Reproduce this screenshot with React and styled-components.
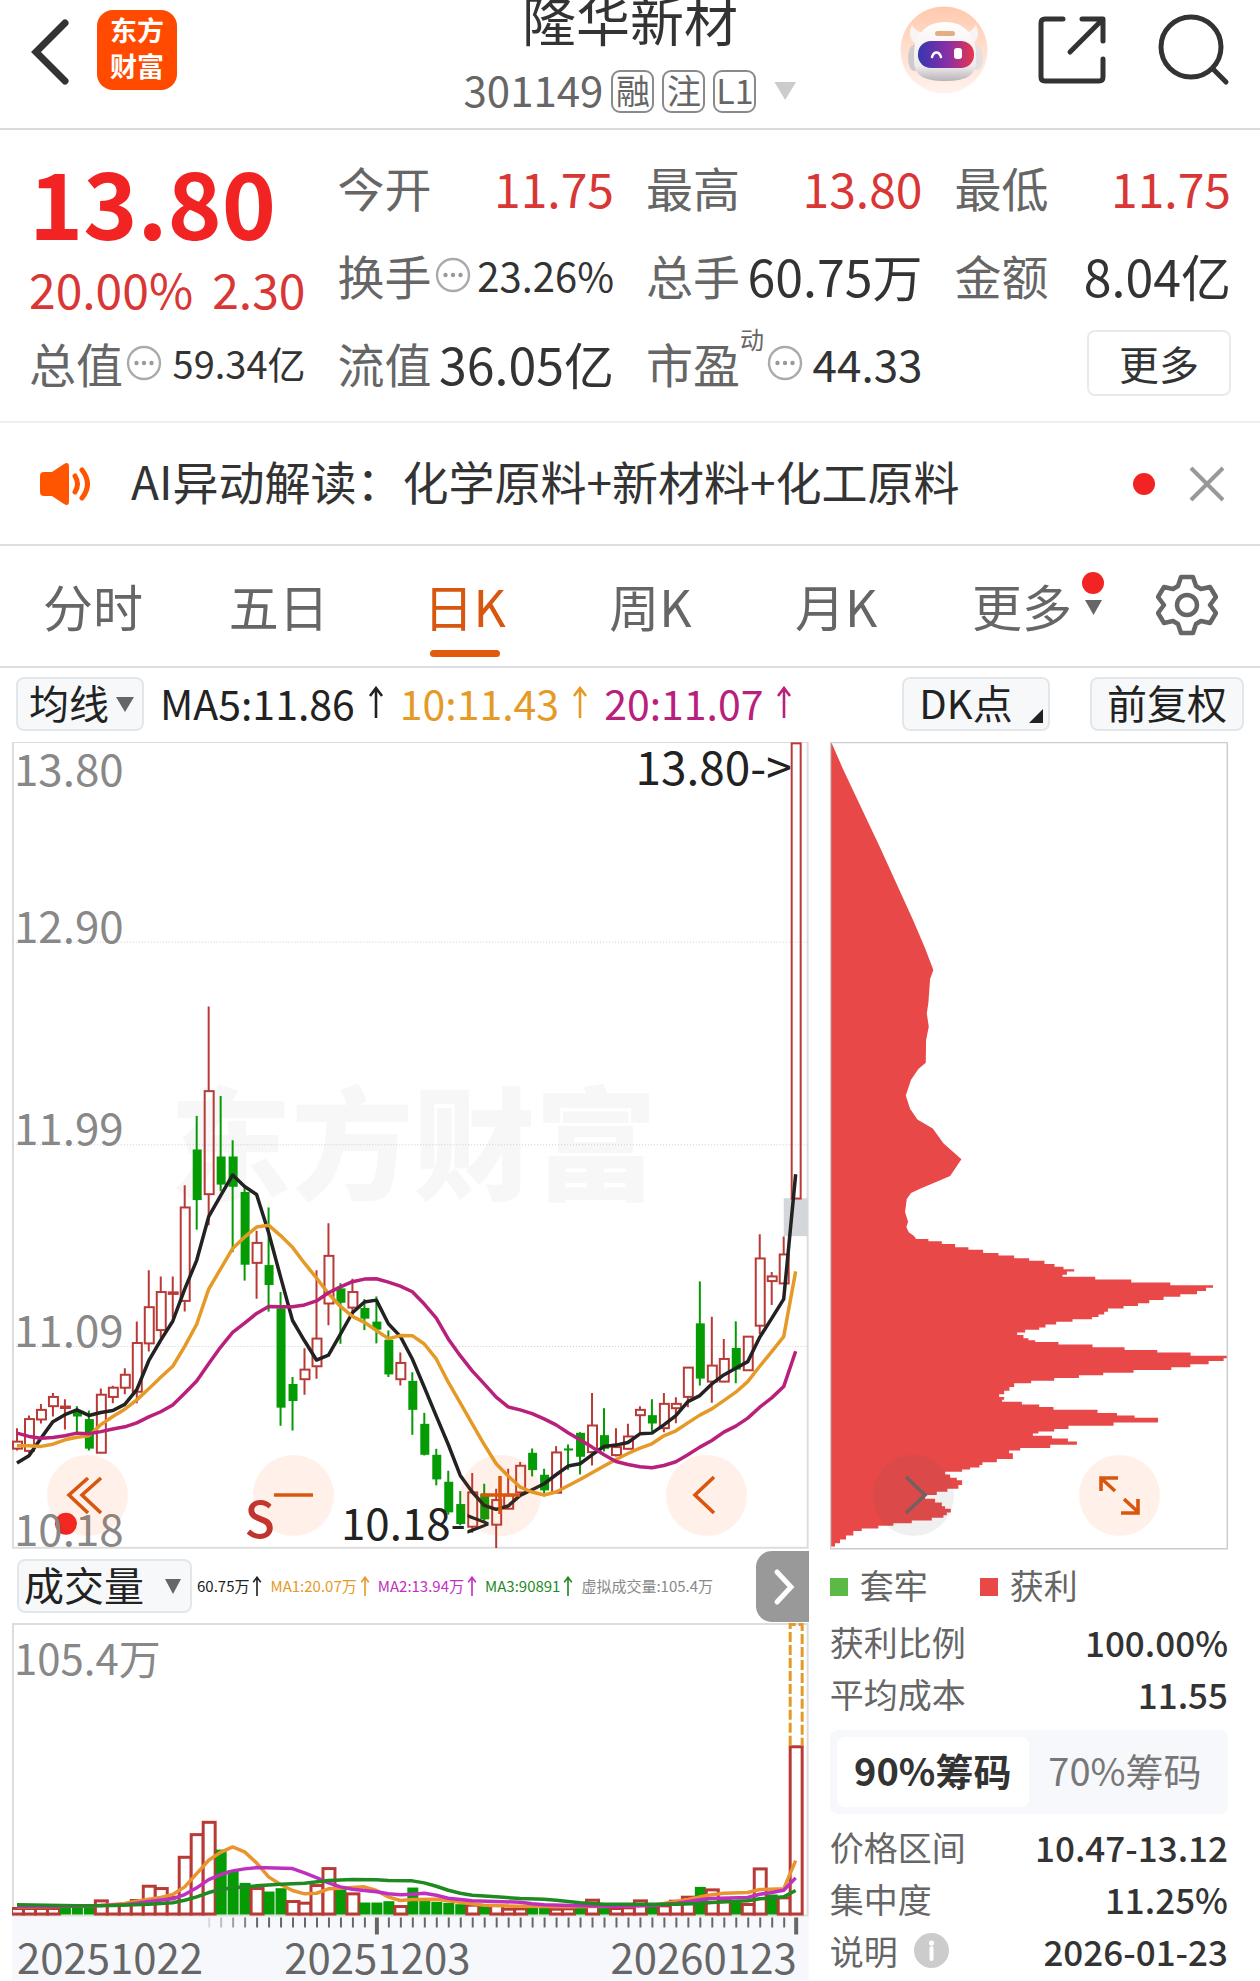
import React, { useState } from "react";
import styled, { createGlobalStyle, css } from "styled-components";

const GlobalStyle = createGlobalStyle`
  * { box-sizing: border-box; }
  body {
    margin: 0;
    background: #fff;
    color: #333;
    font-family: "Noto Sans CJK SC", "Noto Sans", sans-serif;
  }
  button, select {
    font: inherit;
    color: inherit;
    margin: 0;
    padding: 0;
    border: 0;
    background: none;
    cursor: pointer;
  }
  svg { display: block; flex: none; }
  h1, p, dl, dd, dt { margin: 0; font-weight: 400; }
`;

/* ---------- header ---------- */

const Header = styled.header`
  display: grid;
  grid-template-columns: 1fr auto 1fr;
  height: 130px;
  border-bottom: 2px solid #d9dcdf;
`;

const HeaderSide = styled.div`
  display: flex;
  align-items: flex-start;
  gap: ${(p) => p.$gap}px;
  padding: 6px 30px 0;
  justify-content: ${(p) => (p.$end ? "flex-end" : "flex-start")};
`;

const BackButton = styled.button`
  padding-top: 12px;
`;

const Logo = styled.div`
  width: 80px;
  height: 80px;
  margin-top: 4px;
  border-radius: 16px;
  background: #ff4a00;
  color: #fff;
  font-size: 27px;
  font-weight: 700;
  line-height: 36px;
  padding-top: 2px;
  text-align: center;
`;

const TitleBlock = styled.div`
  display: flex;
  flex-direction: column;
  align-items: center;
`;

const Title = styled.h1`
  font-size: 54px;
  line-height: 38px;
  height: 69px;
  color: #333;
`;

const CodeRow = styled.div`
  display: flex;
  align-items: center;
  gap: 8px;
  height: 44px;
  font-size: 42px;
  line-height: 40px;
  color: #666;
`;

const CodeText = styled.span`
  padding-bottom: 4px;
`;

const Badge = styled.span`
  width: 43px;
  height: 43px;
  border: 2px solid #8a8a8a;
  border-radius: 9px;
  font-size: 34px;
  line-height: 35px;
  text-align: center;
`;

/* ---------- quote ---------- */

const Quote = styled.section`
  display: grid;
  grid-template-columns: repeat(4, 1fr);
  grid-auto-rows: 88px;
  column-gap: 32px;
  padding: 13px 29px 14px 29px;
  border-bottom: 2px solid #eeeff1;
`;

const PriceBlock = styled.div`
  grid-row: span 2;
  color: #f12323;
`;

const Price = styled.p`
  font-size: 92px;
  font-weight: 700;
  line-height: 114px;
`;

const Change = styled.p`
  display: flex;
  justify-content: space-between;
  font-size: 48px;
  line-height: 62px;
  color: #d93636;
`;

const Cell = styled.div`
  display: flex;
  align-items: center;
  line-height: 88px;
  white-space: nowrap;
`;

const CellLabel = styled.span`
  font-size: 47px;
  color: #666;
`;

const CellValue = styled.span`
  margin-left: auto;
  font-size: ${(p) => p.$size}px;
  color: ${(p) => (p.$up ? "#d93636" : "#333")};
`;

const Hint = styled.svg`
  margin-left: 3px;
`;

const Sup = styled.sup`
  align-self: flex-start;
  font-size: 24px;
  line-height: 40px;
  color: #666;
`;

const MoreButton = styled.button`
  width: 144px;
  height: 66px;
  margin-left: auto;
  border: 2px solid #e8eaec;
  border-radius: 8px;
  font-size: 40px;
  line-height: 58px;
`;

/* ---------- notice ---------- */

const Notice = styled.section`
  display: flex;
  align-items: center;
  height: 123px;
  padding: 0 35px 0 39px;
  border-bottom: 2px solid #dcdee0;
`;

const NoticeText = styled.p`
  flex: 1;
  margin-left: 38px;
  padding-bottom: 7px;
  font-size: 46px;
  line-height: 60px;
`;

const Dot = styled.i`
  width: 22px;
  height: 22px;
  margin-right: 34px;
  border-radius: 50%;
  background: #f12323;
`;

/* ---------- tabs ---------- */

const Tabs = styled.nav`
  display: grid;
  grid-template-columns: repeat(6, 1fr) 145px;
  height: 122px;
  border-bottom: 2px solid #dcdee0;
`;

const Tab = styled.button`
  position: relative;
  display: flex;
  align-items: center;
  justify-content: center;
  gap: 10px;
  padding-bottom: 2px;
  font-size: 50px;
  line-height: 60px;
  color: ${(p) => (p.$active ? "#d8570f" : "#666")};
  ${(p) =>
    p.$active &&
    css`
      &::after {
        content: "";
        position: absolute;
        bottom: 9px;
        width: 70px;
        height: 7px;
        border-radius: 4px;
        background: #e25a0c;
      }
    `}
`;

const TabMarks = styled.span`
  width: 22px;
  margin-right: -32px;
  padding-bottom: 22px;
`;

/* ---------- indicator bars ---------- */

const chip = css`
  height: 54px;
  border: 2px solid #e4e7ea;
  border-radius: 8px;
  background: #f6f8fa;
  color: #222;
  font-size: 40px;
  line-height: 46px;
  padding-bottom: 4px;
`;

const Toolbar = styled.section`
  display: flex;
  align-items: center;
  height: 74px;
  padding: 0 16px 2px;
`;

const PickerLabel = styled.label`
  position: relative;
  flex: none;
`;

const Picker = styled.select`
  ${chip}
  display: block;
  appearance: none;
  width: ${(p) => p.$width}px;
  padding-left: ${(p) => p.$pad}px;
`;

const PickerArrow = styled.svg`
  position: absolute;
  right: 10px;
  top: 20px;
  pointer-events: none;
`;

const ChipButton = styled.button`
  ${chip}
  position: relative;
  width: ${(p) => p.$width}px;
  padding-right: ${(p) => p.$cut || 0}px;
`;

const Corner = styled.svg`
  position: absolute;
  right: 5px;
  bottom: 6px;
`;

const Averages = styled.div`
  display: flex;
  flex: 1;
  gap: 16px;
  margin-left: 16px;
  padding-bottom: 4px;
  font-size: 41px;
  line-height: 50px;
  white-space: nowrap;
`;

const Reading = styled.span`
  display: flex;
  align-items: center;
  gap: ${(p) => p.$gap}px;
  color: ${(p) => p.$color};
`;

const ChipGroup = styled.div`
  display: flex;
  gap: 40px;
`;

/* ---------- charts ---------- */

const ChartRow = styled.section`
  position: relative;
  display: grid;
  grid-template-columns: 2fr 1fr;
  column-gap: 21px;
  padding: 0 32px 0 12px;
`;

const Plot = styled.svg`
  width: 100%;
  height: auto;
`;

const AxisText = styled.text`
  font-size: ${(p) => p.$size || 44}px;
  fill: ${(p) => p.$fill || "#888"};
  font-weight: ${(p) => p.$weight || 400};
`;

const PlotControls = styled.div`
  position: absolute;
  left: 47px;
  right: 100px;
  bottom: 14px;
  display: flex;
  justify-content: space-between;
`;

const RoundButton = styled.button`
  width: 81px;
  height: 81px;
  border-radius: 50%;
  background: ${(p) => (p.$muted ? "rgba(90, 90, 90, 0.09)" : "rgba(255, 98, 20, 0.09)")};
`;

const VolumeBar = styled.div`
  display: flex;
  align-items: center;
  height: 73px;
  padding-left: 5px;
`;

const VolumeReadings = styled.div`
  display: flex;
  flex: 1;
  gap: 8px;
  margin-left: 5px;
  font-size: 15px;
  line-height: 24px;
  white-space: nowrap;
`;

const NextButton = styled.button`
  width: 53px;
  height: 71px;
  border-radius: 16px 0 0 16px;
  background: #999;
`;

/* ---------- chip statistics ---------- */

const Legend = styled.div`
  display: flex;
  align-items: center;
  gap: 52px;
  height: 66px;
  padding-top: 4px;
`;

const LegendItem = styled.span`
  display: flex;
  align-items: center;
  gap: 12px;
  font-size: 34px;
  line-height: 40px;
  color: #666;
  &::before {
    content: "";
    width: 18px;
    height: 18px;
    margin-top: 4px;
    background: ${(p) => p.$color};
  }
`;

const Stat = styled.div`
  display: flex;
  align-items: center;
  justify-content: space-between;
  height: 52px;
  line-height: 52px;
`;

const StatLabel = styled.dt`
  display: flex;
  align-items: center;
  gap: 16px;
  font-size: 34px;
  color: #666;
`;

const StatValue = styled.dd`
  font-size: 35px;
  font-weight: 500;
`;

const Segments = styled.div`
  display: flex;
  height: 84px;
  margin: 10px 0 7px;
  padding: 7px;
  border-radius: 8px;
  background: #f7f8fb;
`;

const Segment = styled.button`
  flex: 1;
  border-radius: 8px;
  font-size: 38px;
  line-height: 62px;
  padding-bottom: 4px;
  font-weight: ${(p) => (p.$active ? 700 : 400)};
  color: ${(p) => (p.$active ? "#333" : "#777")};
  background: ${(p) => (p.$active ? "#fff" : "transparent")};
`;

/* ---------- icons ---------- */

const Down = ({ w = 18, h = 15, color = "#666" }) => (
  <svg width={w} height={h} viewBox="0 0 18 15" preserveAspectRatio="xMaxYMid meet">
    <path d="M0 0h18l-9 15z" fill={color} />
  </svg>
);

const UpArrow = ({ h }) => (
  <svg width={h / 2} height={h} viewBox="0 0 16 32" fill="none" stroke="currentColor" strokeWidth="2.6">
    <path d="M8 32V3M2 10l6-8 6 8" />
  </svg>
);

const Ellipsis = () => (
  <Hint width="36" height="36" viewBox="0 0 36 36">
    <circle cx="18" cy="18" r="16" fill="none" stroke="#aaa" strokeWidth="2.4" />
    <g fill="#999">
      <circle cx="10.500" cy="18" r="2.200" />
      <circle cx="18" cy="18" r="2.200" />
      <circle cx="25.500" cy="18" r="2.200" />
    </g>
  </Hint>
);

const BackIcon = () => (
  <svg width="40" height="68" viewBox="0 0 40 68" fill="none" stroke="#333" strokeWidth="7">
    <path d="M35 5L6 34l29 29" strokeLinecap="round" strokeLinejoin="miter" />
  </svg>
);

const RobotIcon = () => (
  <svg width="88" height="88" viewBox="0 0 88 88">
    <defs>
      <linearGradient id="halo" x1="0" y1="0" x2="0" y2="1">
        <stop offset="0" stopColor="#ffc9ad" />
        <stop offset="0.5" stopColor="#ffdfcf" />
        <stop offset="1" stopColor="#fff3ed" />
      </linearGradient>
      <linearGradient id="visor" x1="0" y1="0" x2="1" y2="0">
        <stop offset="0" stopColor="#3536b0" />
        <stop offset="0.55" stopColor="#8b2fa4" />
        <stop offset="1" stopColor="#e8364c" />
      </linearGradient>
      <linearGradient id="shell" x1="0" y1="0" x2="0" y2="1">
        <stop offset="0" stopColor="#fffefd" />
        <stop offset="0.75" stopColor="#efebec" />
        <stop offset="1" stopColor="#b9b3b8" />
      </linearGradient>
    </defs>
    <circle cx="44" cy="44" r="43.500" fill="url(#halo)" />
    <path d="M12 19c-4 8-2 15 4 19l10-11c-7 0-11-3-14-8zM76 19c4 8 2 15-4 19L62 27c7 0 11-3 14-8z" fill="#f8f4f3" />
    <ellipse cx="14" cy="52" rx="6" ry="13" fill="#cfcacd" />
    <ellipse cx="77" cy="52" rx="6" ry="12" fill="#e4dfe0" />
    <path d="M14 48c0-17 10-32 31-32s31 15 31 32v6c0 16-10 21-31 21S14 70 14 54z" fill="url(#shell)" />
    <rect x="35" y="25" width="20" height="5" rx="2.500" fill="#e3ae83" />
    <rect x="18" y="35" width="56" height="27" rx="13" fill="url(#visor)" />
    <path d="M32 51c2-6 7-6 9 0" fill="none" stroke="#fff" strokeWidth="2.500" strokeLinecap="round" />
    <rect x="54" y="42" width="8" height="11" rx="3" fill="#fff" />
  </svg>
);

const ShareIcon = () => (
  <svg width="72" height="88" viewBox="0 0 72 88" fill="none" stroke="#333" strokeWidth="5" strokeLinecap="round">
    <path d="M26 13H8q-4 0-4 4v54q0 4 4 4h54q4 0 4-4V53" />
    <path d="M45 13h21v22M65 14L33 46" strokeLinejoin="round" />
  </svg>
);

const SearchIcon = () => (
  <svg width="72" height="84" viewBox="0 0 72 84" fill="none" stroke="#333" strokeWidth="5" strokeLinecap="round">
    <circle cx="33" cy="41" r="30" />
    <path d="M55 63l13 13" />
  </svg>
);

const SpeakerIcon = () => (
  <svg width="54" height="44" viewBox="0 0 54 44">
    <path d="M5 10h8L25 2q5-3 5 3v34q0 6-5 3l-12-8H5q-4 0-4-4V14q0-4 4-4z" fill="#ff5500" />
    <path d="M36 14q5 8 0 16M43 8q11 14 0 28" fill="none" stroke="#ff5500" strokeWidth="5" strokeLinecap="round" />
  </svg>
);

const CloseIcon = () => (
  <svg width="36" height="36" viewBox="0 0 36 36" stroke="#999" strokeWidth="4">
    <path d="M2 2l32 32M34 2L2 34" />
  </svg>
);

const GearIcon = () => (
  <svg width="62" height="62" viewBox="0 0 62 62" fill="none" stroke="#666" strokeWidth="4.500" strokeLinejoin="round">
    <path d="M25 3h12l3 9 5 3 9-2 6 10-6 8 6 8-6 10-9-2-5 3-3 9H25l-3-9-5-3-9 2-6-10 6-8-6-8 6-10 9 2 5-3z" />
    <circle cx="31" cy="31" r="10" />
  </svg>
);

const InfoIcon = () => (
  <svg width="35" height="35" viewBox="0 0 35 35">
    <circle cx="17.500" cy="17.500" r="17.500" fill="#ccc" />
    <circle cx="17.500" cy="10" r="2.600" fill="#fff" />
    <path d="M17.500 15v11" stroke="#fff" strokeWidth="4" strokeLinecap="round" />
  </svg>
);

const controlPaths = {
  first: "M41 23L22 40l19 18M54 23L35 40l19 18",
  minus: "M21 40h39",
  plus: "M21 40h39M40 21v38",
  prev: "M48 22L29 40l19 18",
  next: "M33 22l19 18-19 18",
  expand: "M36 36L23 24M22 36V23h17M45 44l13 12M59 44v14H42",
};

const ControlIcon = ({ name, color = "#d8570f" }) => (
  <svg width="81" height="81" viewBox="0 0 81 81" fill="none" stroke={color} strokeWidth="3.600">
    <path d={controlPaths[name]} />
  </svg>
);

/* ---------- series ---------- */

const RED = "#b83a36";
const GREEN = "#049b04";
const xAt = (i) => 17 + 12 * i;
const early = (v) => 980 + v / 2.703;
const late = (v) => 1180 + v / 3;

// Each session: direction, high, body top, body bottom, low.
const firstSessions = [
  ["r", 1215, 1251, 1270, 1275], ["r", 1180, 1190, 1276, 1282], ["r", 1149, 1165, 1191, 1202],
  ["r", 1119, 1130, 1155, 1183], ["r", 1136, 1156, 1160, 1218], ["g", 1155, 1170, 1183, 1225],
  ["g", 1167, 1190, 1270, 1275], ["r", 1107, 1124, 1281, 1281], ["r", 1100, 1105, 1130, 1147],
  ["r", 1052, 1070, 1105, 1123], ["r", 926, 984, 1116, 1147], ["r", 787, 887, 985, 1007],
  ["r", 804, 846, 949, 970], ["r", 804, 847, 851, 915], ["r", 557, 617, 870, 899],
  ["g", 369, 460, 597, 677], ["r", 73, 302, 581, 665], ["g", 315, 479, 555, 573],
  ["g", 435, 479, 561, 738], ["g", 560, 575, 772, 815], ["r", 680, 713, 767, 864],
  ["g", 617, 773, 827, 899], ["g", 846, 890, 1159, 1208], ["g", 1076, 1095, 1141, 1221],
  ["r", 998, 1056, 1082, 1124], ["r", 787, 972, 1047, 1081], ["r", 660, 748, 877, 936],
  ["g", 822, 836, 875, 986], ["r", 810, 846, 888, 910], ["g", 865, 889, 918, 949],
  ["g", 858, 926, 948, 985], ["g", 950, 975, 1069, 1076], ["r", 1010, 1038, 1082, 1099],
];
const lastSessions = [
  ["g", 580, 606, 693, 768], ["g", 702, 735, 828, 830], ["g", 810, 828, 902, 920],
  ["g", 876, 909, 1001, 1008], ["g", 937, 976, 1036, 1040], ["r", 883, 941, 1044, 1062],
  ["g", 915, 945, 1022, 1028], ["r", 930, 964, 1038, 1108], ["r", 870, 950, 990, 992],
  ["r", 850, 861, 941, 945], ["g", 809, 822, 874, 893], ["g", 870, 888, 935, 953],
  ["r", 802, 821, 942, 942], ["g", 797, 809, 813, 873], ["g", 760, 762, 834, 887],
  ["r", 642, 740, 820, 860], ["g", 688, 769, 810, 818], ["r", 748, 805, 829, 833],
  ["r", 735, 773, 810, 812], ["r", 682, 693, 709, 765], ["g", 661, 709, 734, 758],
  ["r", 642, 675, 748, 760], ["r", 655, 675, 688, 733], ["r", 566, 566, 654, 685],
  ["g", 307, 433, 599, 620], ["r", 413, 560, 608, 672], ["r", 480, 540, 608, 610],
  ["g", 427, 507, 572, 613], ["r", 473, 473, 574, 575], ["r", 165, 238, 440, 465],
  ["r", 279, 292, 306, 378], ["r", 172, 226, 313, 315], ["r", -1310, -1310, 58, 58],
];
const sessions = [
  ...firstSessions.map(([d, ...v]) => [d, ...v.map(early)]),
  ...lastSessions.map(([d, ...v]) => [d, ...v.map(late)]),
];

const join = (a, b) => [...a.map(early), ...b.map(late)].map((y, i) => `${xAt(i)},${y.toFixed(1)}`).join(" ");

const ma5 = join(
  [1309, 1289, 1242, 1197, 1178, 1165, 1180, 1172, 1167, 1150, 1110, 1032, 976, 925, 838, 760, 642, 585, 529, 560, 582, 685, 805, 923, 978, 1030, 1017, 960, 902, 873, 868, 932, 966],
  [540, 625, 712, 797, 890, 940, 980, 992, 982, 950, 933, 915, 888, 862, 855, 828, 803, 799, 791, 765, 763, 738, 710, 668, 650, 615, 588, 568, 548, 475, 418, 360, -15]
);
const ma10 = join(
  [1262, 1262, 1264, 1258, 1246, 1239, 1235, 1205, 1183, 1163, 1138, 1108, 1077, 1047, 993, 933, 838, 783, 728, 697, 670, 665, 693, 725, 768, 808, 850, 885, 912, 928, 950, 972, 964],
  [470, 495, 540, 610, 672, 735, 797, 855, 892, 925, 940, 949, 940, 921, 902, 882, 862, 842, 824, 808, 795, 771, 756, 732, 709, 690, 665, 640, 608, 562, 518, 473, 277]
);
const ma20 = join(
  [1228, 1237, 1242, 1240, 1235, 1228, 1230, 1224, 1217, 1211, 1200, 1184, 1170, 1152, 1120, 1087, 1040, 995, 955, 930, 904, 885, 886, 886, 881, 870, 848, 832, 818, 811, 810, 819, 830],
  [338, 375, 417, 480, 530, 576, 615, 655, 684, 693, 704, 720, 738, 762, 783, 805, 828, 848, 857, 864, 867, 860, 849, 828, 805, 785, 760, 742, 718, 685, 657, 623, 517]
);

const volumes = [
  324, 324, 324, 324, 320, 322, 322, 301, 314, 312, 300, 257, 264, 290, 170, 102, 65, 150, 212, 250, 264, 276,
  266, 303, 308, 255, 204, 268, 280, 309, 309, 305, 318, 264, 303, 307, 310, 314, 314, 315, 315, 326, 325, 325,
  325, 326, 325, 322, 299, 318, 324, 322, 301, 315, 316, 302, 290, 262, 268, 300, 308, 312, 205, 285, 292, -162,
];
const volumeDown = new Set([4, 5, 6, 17, 18, 19, 21, 22, 27, 29, 30, 31, 33, 34, 35, 36, 37, 39, 43, 44, 47, 49, 53, 57, 60, 63]);

const volumeLine = (pairs) => pairs.map(([i, v]) => `${xAt(i)},${(1800 + v / 3).toFixed(1)}`).join(" ");

const vol5 = volumeLine([
  [0, 322], [3, 321], [7, 318], [9, 312], [10, 305], [11, 299], [12, 294], [13, 285], [14, 262], [15, 222],
  [16, 182], [17, 158], [18, 142], [19, 157], [20, 190], [21, 232], [22, 255], [23, 273], [24, 283], [25, 281],
  [26, 268], [27, 266], [28, 264], [29, 262], [30, 273], [31, 292], [32, 303], [33, 300], [35, 299], [36, 304],
  [37, 308], [38, 313], [39, 317], [42, 320], [46, 322], [50, 320], [53, 317], [54, 312], [55, 306], [56, 300],
  [57, 292], [58, 286], [59, 281], [61, 279], [62, 270], [64, 268], [65, 183],
]);
const vol10 = volumeLine([
  [0, 320], [5, 320], [9, 316], [10, 311], [11, 306], [13, 298], [14, 285], [15, 265], [16, 240], [17, 225],
  [18, 214], [19, 208], [20, 204], [23, 207], [24, 220], [25, 234], [26, 250], [27, 262], [28, 269], [30, 277],
  [31, 283], [32, 286], [33, 284], [34, 281], [35, 287], [36, 296], [38, 304], [42, 308], [43, 313], [44, 316],
  [47, 319], [50, 320], [53, 318], [55, 312], [57, 301], [58, 297], [61, 294], [62, 284], [63, 279], [64, 272],
  [65, 235],
]);
const vol20 = volumeLine([
  [0, 316], [5, 319], [8, 318], [11, 314], [13, 310], [14, 302], [15, 292], [16, 279], [17, 270], [18, 265],
  [20, 259], [22, 254], [24, 251], [26, 243], [28, 240], [30, 241], [31, 243], [33, 244], [34, 250], [35, 260],
  [36, 272], [37, 281], [38, 287], [40, 292], [42, 297], [44, 299], [45, 302], [46, 306], [47, 310], [49, 314],
  [55, 314], [57, 312], [58, 309], [61, 304], [62, 298], [64, 292], [65, 273],
]);

// Outline of the holding-cost distribution: a smooth upper part, then one step per price level.
const smooth = [
  [63, 22], [100, 75], [210, 222], [310, 360], [345, 412], [370, 453], [360, 470], [355, 515], [350, 535],
  [356, 560], [348, 585], [347, 628], [325, 640], [303, 660], [287, 690], [300, 715], [322, 735], [368, 752],
  [400, 780], [454, 810], [420, 842], [383, 852], [330, 866], [303, 874], [290, 885], [285, 910], [294, 928],
  [289, 938], [296, 948], [312, 955], [318, 961],
];
const steps = [
  [355, 961], [395, 965], [435, 970], [475, 976], [519, 981], [565, 987], [612, 992], [657, 997], [703, 1002],
  [733, 1008], [760, 1013], [792, 1018], [770, 1022], [757, 1028], [855, 1032], [963, 1037], [1080, 1043],
  [1208, 1048], [1187, 1053], [1160, 1059], [1110, 1065], [1060, 1070], [1017, 1076], [983, 1082], [940, 1087],
  [893, 1092], [882, 1098], [865, 1103], [845, 1108], [787, 1112], [738, 1117], [706, 1122], [687, 1128],
  [645, 1132], [621, 1137], [640, 1142], [655, 1148], [675, 1152], [745, 1155], [847, 1160], [943, 1165],
  [1041, 1170], [1141, 1175], [1250, 1181], [1240, 1186], [1195, 1191], [1140, 1197], [1083, 1203], [970, 1208],
  [879, 1213], [806, 1218], [732, 1223], [663, 1228], [612, 1233], [598, 1240], [582, 1247], [567, 1254],
  [582, 1259], [576, 1264], [635, 1268], [687, 1273], [730, 1278], [862, 1283], [920, 1289], [973, 1294],
  [1043, 1298], [910, 1307], [775, 1313], [732, 1319], [685, 1324], [668, 1328], [725, 1332], [773, 1337],
  [800, 1343], [720, 1349], [630, 1355], [597, 1360], [608, 1365], [560, 1376], [517, 1382], [508, 1387],
  [480, 1392], [456, 1396], [405, 1400], [420, 1405], [440, 1411], [456, 1416], [445, 1425], [412, 1432],
  [380, 1438], [345, 1444], [375, 1451], [395, 1458], [405, 1465], [422, 1470], [410, 1477], [400, 1482],
  [365, 1487], [305, 1492], [250, 1497], [205, 1502], [155, 1507], [130, 1512], [108, 1520], [90, 1528],
  [75, 1535], [63, 1541],
];
const dx = (v) => (810 + v / 3).toFixed(1);
const dy = (v) => (730 + v / 1.889).toFixed(1);
const distribution =
  "M" + smooth.map(([x, y]) => `${dx(x)} ${dy(y)}`).join("L") + steps.map(([x, y]) => `V${dy(y)}H${dx(x)}`).join("") + "H831Z";

const Candle = ({ index, data: [dir, high, top, bottom, low] }) => {
  const x = xAt(index);
  if (dir === "g") {
    return (
      <g fill={GREEN}>
        <rect x={x - 1} y={high} width="2" height={low - high} />
        <rect x={x - 4} y={top} width="9" height={Math.max(2, bottom - top)} />
      </g>
    );
  }
  return (
    <g fill="none" stroke={RED} strokeWidth="2">
      <path d={`M${x} ${high}V${top}M${x} ${bottom}V${low}`} />
      <rect x={x - 4} y={top} width="9" height={Math.max(1, bottom - top)} />
    </g>
  );
};

const PriceChart = () => (
  <Plot viewBox="12 742 798 808" role="img" aria-label="日K">
    <AxisText x="170" y="1191" $size={122} $weight={900} $fill="#f7f7f7">东方财富</AxisText>
    <path d="M13 742H809V1549H13Z" fill="none" stroke="#ddd" strokeWidth="2" />
    <path d="M13 942.500H809M13 1145.500H809M13 1347.500H809" stroke="#ccc" strokeDasharray="1 2" />
    <rect x="785" y="1199" width="24" height="38" fill="#d3d7dc" />
    {sessions.map((s, i) => (
      <Candle key={i} index={i} data={s} />
    ))}
    <g fill="none" strokeWidth="3.500" strokeLinejoin="round">
      <polyline points={ma5} stroke="#222" />
      <polyline points={ma10} stroke="#e59a27" />
      <polyline points={ma20} stroke="#b8207c" />
    </g>
    <circle cx="66" cy="1525" r="11" fill="#f12323" />
    <AxisText x="14" y="786">13.80</AxisText>
    <AxisText x="14" y="943">12.90</AxisText>
    <AxisText x="14" y="1146">11.99</AxisText>
    <AxisText x="14" y="1348">11.09</AxisText>
    <AxisText x="14" y="1547">10.18</AxisText>
    <AxisText x="793" y="785" textAnchor="end" $size={46} $fill="#222">13.80-&gt;</AxisText>
    <AxisText x="491" y="1541" textAnchor="end" $fill="#222">10.18-&gt;</AxisText>
    <AxisText x="245" y="1539" $size={50} $weight={500} $fill="#c0332f">S</AxisText>
  </Plot>
);

const CostChart = () => (
  <Plot viewBox="830 742 398 807" role="img" aria-label="筹码">
    <path d={distribution} fill="#e84848" />
    <path d="M830.500 742.500H1227V1548H830.500Z" fill="none" stroke="#ccc" strokeWidth="1.500" />
  </Plot>
);

const VolumeChart = () => (
  <Plot viewBox="12 1623 798 358" role="img" aria-label="成交量">
    <rect x="12" y="1917" width="798" height="64" fill="#f7f8fb" />
    <path d="M13 1624H809V1916H13Z" fill="none" stroke="#ddd" strokeWidth="2" />
    {volumes.map((v, i) => {
      const top = 1800 + v / 3;
      return volumeDown.has(i) ? (
        <rect key={i} x={xAt(i) - 5} y={top} width="11" height={1915 - top} fill={GREEN} />
      ) : (
        <rect key={i} x={xAt(i) - 5.5} y={top + 1} width="12" height={1913.5 - top} fill="#fff" stroke={RED} strokeWidth="3" />
      );
    })}
    <path d="M791.500 1746V1624.500H803.500V1746" fill="none" stroke="#e59a27" strokeWidth="3" strokeDasharray="10 3" />
    <g fill="none" strokeWidth="3.500" strokeLinejoin="round">
      <polyline points={vol5} stroke="#ea9430" />
      <polyline points={vol10} stroke="#c030c0" />
      <polyline points={vol20} stroke="#1f8a1f" />
    </g>
    {Array.from({ length: 50 }, (_, k) => k + 16).map((i) => {
      const major = i === 30 || i === 65;
      return (
        <path
          key={i}
          d={`M${xAt(i) + 0.5} 1918v${major ? 17 : 10}`}
          stroke="#666"
          strokeWidth={major ? 4 : 2}
          opacity={Math.min(1, (i - 15) / 5)}
        />
      );
    })}
    <AxisText x="14" y="1675" $size={42}>105.4万</AxisText>
    <AxisText x="17" y="1975" $size={42} $fill="#666">20251022</AxisText>
    <AxisText x="378" y="1975" textAnchor="middle" $size={42} $fill="#666">20251203</AxisText>
    <AxisText x="798" y="1975" textAnchor="end" $size={42} $fill="#666">20260123</AxisText>
  </Plot>
);

const StatRow = ({ label, value, info }) => (
  <Stat>
    <StatLabel>
      {label}
      {info && <InfoIcon />}
    </StatLabel>
    <StatValue>{value}</StatValue>
  </Stat>
);

const QuoteCell = ({ label, value, up, hint, sup, size = 50 }) => (
  <Cell>
    <CellLabel>{label}</CellLabel>
    {sup && <Sup>{sup}</Sup>}
    {hint && <Ellipsis />}
    <CellValue $up={up} $size={size}>{value}</CellValue>
  </Cell>
);

const tabs = ["分时", "五日", "日K", "周K", "月K"];

export default function App() {
  const [tab, setTab] = useState("日K");
  const [range, setRange] = useState("90%筹码");

  return (
    <>
      <GlobalStyle />
      <Header>
        <HeaderSide $gap={27}>
          <BackButton aria-label="返回"><BackIcon /></BackButton>
          <Logo>东方<br />财富</Logo>
        </HeaderSide>
        <TitleBlock>
          <Title>隆华新材</Title>
          <CodeRow>
            <CodeText>301149</CodeText>
            <Badge>融</Badge>
            <Badge>注</Badge>
            <Badge>L1</Badge>
            <Down w={32} h={18} color="#ccc" />
          </CodeRow>
        </TitleBlock>
        <HeaderSide $gap={49} $end>
          <button aria-label="助手"><RobotIcon /></button>
          <button aria-label="分享"><ShareIcon /></button>
          <button aria-label="搜索"><SearchIcon /></button>
        </HeaderSide>
      </Header>

      <Quote>
        <PriceBlock>
          <Price>13.80</Price>
          <Change><span>20.00%</span><span>2.30</span></Change>
        </PriceBlock>
        <QuoteCell label="今开" value="11.75" up size={48} />
        <QuoteCell label="最高" value="13.80" up size={48} />
        <QuoteCell label="最低" value="11.75" up size={48} />
        <QuoteCell label="换手" value="23.26%" hint size={40} />
        <QuoteCell label="总手" value="60.75万" />
        <QuoteCell label="金额" value="8.04亿" />
        <QuoteCell label="总值" value="59.34亿" hint size={38} />
        <QuoteCell label="流值" value="36.05亿" />
        <QuoteCell label="市盈" value="44.33" sup="动" hint size={44} />
        <Cell><MoreButton>更多</MoreButton></Cell>
      </Quote>

      <Notice>
        <SpeakerIcon />
        <NoticeText>AI异动解读：化学原料+新材料+化工原料</NoticeText>
        <Dot />
        <button aria-label="关闭"><CloseIcon /></button>
      </Notice>

      <Tabs>
        {tabs.map((name) => (
          <Tab key={name} $active={tab === name} onClick={() => setTab(name)}>{name}</Tab>
        ))}
        <Tab>
          更多
          <TabMarks>
            <svg width="22" height="44" viewBox="0 0 22 44">
              <circle cx="11" cy="11" r="11" fill="#f12323" />
              <path d="M3 28h17l-8.500 15z" fill="#666" />
            </svg>
          </TabMarks>
        </Tab>
        <Tab aria-label="设置"><GearIcon /></Tab>
      </Tabs>

      <Toolbar>
        <PickerLabel>
          <Picker aria-label="均线" $width={128} $pad={11}><option>均线</option></Picker>
          <PickerArrow width="18" height="15" viewBox="0 0 18 15"><path d="M0 0h18l-9 15z" fill="#666" /></PickerArrow>
        </PickerLabel>
        <Averages>
          <Reading $gap={13} $color="#222">MA5:11.86<UpArrow h={32} /></Reading>
          <Reading $gap={13} $color="#e59a27">10:11.43<UpArrow h={32} /></Reading>
          <Reading $gap={13} $color="#b8207c">20:11.07<UpArrow h={32} /></Reading>
        </Averages>
        <ChipGroup>
          <ChipButton $width={148} $cut={20}>
            DK点
            <Corner width="14" height="14" viewBox="0 0 14 14"><path d="M14 0v14H0z" fill="#222" /></Corner>
          </ChipButton>
          <ChipButton $width={154}>前复权</ChipButton>
        </ChipGroup>
      </Toolbar>

      <ChartRow>
        <PriceChart />
        <CostChart />
        <PlotControls>
          <RoundButton aria-label="最早"><ControlIcon name="first" /></RoundButton>
          <RoundButton aria-label="缩小"><ControlIcon name="minus" /></RoundButton>
          <RoundButton aria-label="放大"><ControlIcon name="plus" /></RoundButton>
          <RoundButton aria-label="向左"><ControlIcon name="prev" /></RoundButton>
          <RoundButton aria-label="向右" $muted><ControlIcon name="next" color="#775f5f" /></RoundButton>
          <RoundButton aria-label="全屏"><ControlIcon name="expand" /></RoundButton>
        </PlotControls>
      </ChartRow>

      <ChartRow>
        <div>
          <VolumeBar>
            <PickerLabel>
              <Picker aria-label="成交量" $width={175} $pad={5}><option>成交量</option></Picker>
              <PickerArrow width="18" height="15" viewBox="0 0 18 15"><path d="M1 0h16l-8 15z" fill="#666" /></PickerArrow>
            </PickerLabel>
            <VolumeReadings>
              <Reading $gap={3} $color="#222">60.75万<UpArrow h={20} /></Reading>
              <Reading $gap={3} $color="#e59a27">MA1:20.07万<UpArrow h={20} /></Reading>
              <Reading $gap={3} $color="#c030c0">MA2:13.94万<UpArrow h={20} /></Reading>
              <Reading $gap={3} $color="#1f8a1f">MA3:90891<UpArrow h={20} /></Reading>
              <Reading $gap={3} $color="#888">虚拟成交量:105.4万</Reading>
            </VolumeReadings>
            <NextButton aria-label="更多指标">
              <svg width="53" height="71" viewBox="0 0 53 71" fill="none" stroke="#fff" strokeWidth="5">
                <path d="M21 21l14 15-14 15" strokeLinecap="round" />
              </svg>
            </NextButton>
          </VolumeBar>
          <VolumeChart />
        </div>
        <div>
          <Legend>
            <LegendItem $color="#5cb946">套牢</LegendItem>
            <LegendItem $color="#e84848">获利</LegendItem>
          </Legend>
          <dl>
            <StatRow label="获利比例" value="100.00%" />
            <StatRow label="平均成本" value="11.55" />
          </dl>
          <Segments>
            {["90%筹码", "70%筹码"].map((name) => (
              <Segment key={name} aria-pressed={range === name} $active={range === name} onClick={() => setRange(name)}>
                {name}
              </Segment>
            ))}
          </Segments>
          <dl>
            <StatRow label="价格区间" value="10.47-13.12" />
            <StatRow label="集中度" value="11.25%" />
            <StatRow label="说明" value="2026-01-23" info />
          </dl>
        </div>
      </ChartRow>
    </>
  );
}
